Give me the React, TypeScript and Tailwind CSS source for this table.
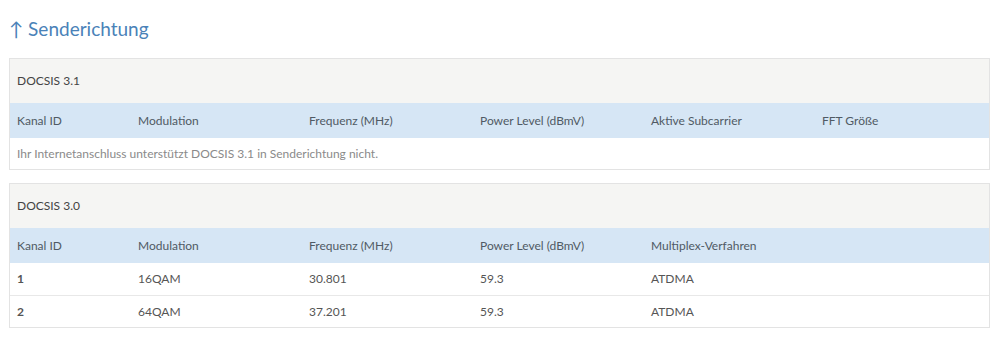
const COLS = "grid grid-cols-[121px_171px_171px_171px_171px_1fr]";

interface Channel {
  id: string;
  modulation: string;
  freq: string;
  power: string;
  mux: string;
}

const upstream30: Channel[] = [
  { id: "1", modulation: "16QAM", freq: "30.801", power: "59.3", mux: "ATDMA" },
  { id: "2", modulation: "64QAM", freq: "37.201", power: "59.3", mux: "ATDMA" },
];

function HeadRow({ cols }: { cols: string[] }) {
  return (
    <div className={`${COLS} h-[35px] items-center bg-[#d6e6f5] text-[#505a64]`}>
      {cols.map((c, i) => (
        <div key={i} className="pl-[7px]">
          {c}
        </div>
      ))}
    </div>
  );
}

function Panel({ title, children }: { title: string; children: React.ReactNode }) {
  return (
    <div className="mx-[9px] border border-[#e3e3e3] bg-white">
      <div className="h-[44px] flex items-center pl-[7px] bg-[#f5f5f3] text-[#444]">{title}</div>
      {children}
    </div>
  );
}

export default function App() {
  return (
    <div className="w-[999px] h-[341px] bg-white text-[12px] font-['Lato',sans-serif] overflow-hidden">
      <h2 className="pt-[16px] pl-[9px] h-[58px] text-[19px] text-[#4a82b8] leading-[26px]">↑ Senderichtung</h2>

      <Panel title="DOCSIS 3.1">
        <HeadRow
          cols={["Kanal ID", "Modulation", "Frequenz (MHz)", "Power Level (dBmV)", "Aktive Subcarrier", "FFT Größe"]}
        />
        <div className="h-[31px] flex items-center pl-[7px] text-[#8a8a8a]">
          Ihr Internetanschluss unterstützt DOCSIS 3.1 in Senderichtung nicht.
        </div>
      </Panel>

      <div className="h-[13px]" />

      <Panel title="DOCSIS 3.0">
        <HeadRow cols={["Kanal ID", "Modulation", "Frequenz (MHz)", "Power Level (dBmV)", "Multiplex-Verfahren", ""]} />
        {upstream30.map((ch, i) => (
          <div
            key={ch.id}
            className={`${COLS} h-[32px] items-center text-[#555] ${i > 0 ? "border-t border-[#e8e8e8]" : ""}`}
          >
            <div className="pl-[7px] font-bold">{ch.id}</div>
            <div className="pl-[7px]">{ch.modulation}</div>
            <div className="pl-[7px]">{ch.freq}</div>
            <div className="pl-[7px]">{ch.power}</div>
            <div className="pl-[7px]">{ch.mux}</div>
            <div />
          </div>
        ))}
      </Panel>
    </div>
  );
}
